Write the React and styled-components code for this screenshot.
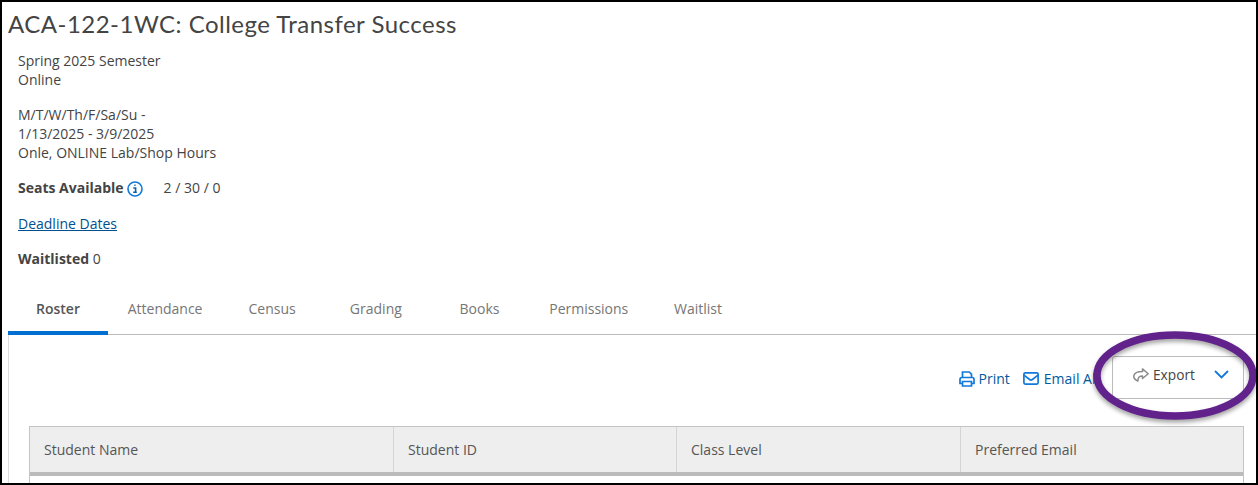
import styled, { createGlobalStyle } from "styled-components";

const GlobalStyle = createGlobalStyle`
  html, body {
    margin: 0;
    padding: 0;
    background: #fff;
  }
  body {
    font-family: "Open Sans", "Liberation Sans", sans-serif;
    font-size: 14px;
    color: #444;
  }
`;

const Frame = styled.div`
  box-sizing: border-box;
  width: 1258px;
  height: 485px;
  border: 2px solid #000;
  overflow: hidden;
  background: #fff;
  padding: 0 0 0 6px;
`;

const Title = styled.h1`
  margin: 0;
  padding-top: 6px;
  font-family: "Lato", "Noto Sans", sans-serif;
  font-size: 24px;
  font-weight: 400;
  line-height: 32px;
  letter-spacing: 0.48px;
  color: #444;
`;

const Details = styled.div`
  padding: 11px 0 0 10px;
  line-height: 19px;
`;

const Block = styled.div`
  margin-bottom: ${(p) => p.$gap || 0}px;
`;

const SeatsRow = styled.div`
  display: flex;
  align-items: center;
  height: 19px;
  margin-bottom: 17px;
`;

const Label = styled.strong`
  font-weight: 700;
`;

const SeatCount = styled.span`
  margin-left: 21px;
`;

const InfoButton = styled.svg`
  width: 16px;
  height: 16px;
  margin-left: 3px;
  margin-top: 2px;
`;

const DeadlineLink = styled.a`
  color: #00508f;
  text-decoration: underline;
`;

const Tabs = styled.div`
  display: flex;
  gap: 3.7px;
  margin-top: 23px;
  height: 43px;
  border-bottom: 1px solid #bbb;
  margin-right: -1px;
`;

const Tab = styled.div`
  box-sizing: border-box;
  min-width: 100px;
  height: 44px;
  padding: 0 16px 6px;
  display: flex;
  align-items: center;
  justify-content: center;
  color: ${(p) => (p.$active ? "#555" : "#767676")};
  font-weight: ${(p) => (p.$active ? 600 : 400)};
  border-bottom: 4px solid ${(p) => (p.$active ? "#006fd1" : "transparent")};
`;

const Panel = styled.div`
  border-left: 1px solid #ddd;
  padding: 21px 12px 0 20px;
`;

const Toolbar = styled.div`
  display: flex;
  justify-content: flex-end;
  align-items: center;
  height: 43px;
  margin-bottom: 27px;
`;

const ToolLink = styled.a`
  display: flex;
  align-items: center;
  gap: ${(p) => p.$iconGap}px;
  margin-right: ${(p) => p.$gap}px;
  margin-top: 2px;
  color: #005a9e;
  white-space: nowrap;
`;

const ExportWrap = styled.div`
  position: relative;
`;

const ExportButton = styled.div`
  box-sizing: border-box;
  display: flex;
  align-items: center;
  width: 132px;
  height: 43px;
  padding: 0 14px 6px 20px;
  border: 1px solid #bbb;
  border-radius: 3px;
  background: #fff;
  color: #444;
  font-size: 13.7px;
  font-weight: 400;
`;

const ExportText = styled.span`
  margin-left: 4px;
  flex: 1;
`;

const Ring = styled.svg`
  position: absolute;
  left: -22px;
  top: -28px;
  width: 170px;
  height: 96px;
  overflow: visible;
  pointer-events: none;
  filter: drop-shadow(0 3px 2px rgba(0, 0, 0, 0.35));
`;

const Table = styled.div`
  border: 1px solid #c4c4c4;
  border-bottom: none;
`;

const HeaderRow = styled.div`
  display: grid;
  grid-template-columns: 363px 283px 284px 1fr;
  height: 45px;
  background: #eee;
  border-bottom: 4px solid #bbb;
`;

const HeaderCell = styled.div`
  display: flex;
  align-items: center;
  padding-left: 14px;
  color: #555;
  border-left: ${(p) => (p.$first ? "none" : "1px solid #d4d4d4")};
`;

const BodyRow = styled.div`
  height: 12px;
  background: #fff;
`;

const PrintIcon = () => (
  <svg width="16" height="16" viewBox="0 0 16 16" fill="none" stroke="#1279dc" strokeWidth="1.7">
    <path d="M3.500 6.500V1h6.700l2.300 2.200v3.300" />
    <path d="M3.500 12.500H1V8.200C1 7.200 1.700 6.500 2.700 6.500h10.600c1 0 1.700.7 1.700 1.700v4.300h-2.500" />
    <path d="M3.500 10.500h9V15h-9z" />
  </svg>
);

const MailIcon = () => (
  <svg width="16" height="13" viewBox="0 0 16 13" fill="none" stroke="#1279dc" strokeWidth="1.7">
    <rect x="0.900" y="0.900" width="14.200" height="11.200" rx="1.300" />
    <path d="M1 3.200l5.600 4.300c.8.600 2 .6 2.800 0L15 3.200" />
  </svg>
);

const ShareIcon = () => (
  <svg width="16" height="14" viewBox="0 0 16 14" fill="none" stroke="#8a8a8a" strokeWidth="1.500" strokeLinejoin="round">
    <path d="M9.500.9l5.700 4.800-5.700 4.800V7.900C6.800 7.900 4.800 9 4.900 13 1.800 11.800.5 9.700.9 7.500 1.400 5 5 3.400 9.500 3.400z" />
  </svg>
);

const Chevron = () => (
  <svg width="15" height="9" viewBox="0 0 15 9" fill="none" stroke="#1279dc" strokeWidth="1.8">
    <path d="M1 1l6.500 6.500L14 1" />
  </svg>
);

const App = () => {
  return (
    <Frame>
      <GlobalStyle />
      <Title>ACA-122-1WC: College Transfer Success</Title>
      <Details>
        <Block $gap={16}>
          <div>Spring 2025 Semester</div>
          <div>Online</div>
        </Block>
        <Block $gap={16}>
          <div>M/T/W/Th/F/Sa/Su -</div>
          <div>1/13/2025 - 3/9/2025</div>
          <div>Onle, ONLINE Lab/Shop Hours</div>
        </Block>
        <SeatsRow>
          <Label>Seats Available</Label>
          <InfoButton viewBox="0 0 16 16" fill="none">
            <circle cx="8" cy="8" r="7" stroke="#1279dc" strokeWidth="1.600" />
            <path d="M6.300 7h2.300v4.200h1.200M6.200 11.200h3.600M7.300 4.300h1.300" stroke="#0a60b0" strokeWidth="1.600" />
          </InfoButton>
          <SeatCount>2 / 30 / 0</SeatCount>
        </SeatsRow>
        <Block $gap={16}>
          <DeadlineLink href="#">Deadline Dates</DeadlineLink>
        </Block>
        <Block>
          <Label>Waitlisted</Label> 0
        </Block>
      </Details>
      <Tabs>
        <Tab $active>Roster</Tab>
        <Tab>Attendance</Tab>
        <Tab>Census</Tab>
        <Tab>Grading</Tab>
        <Tab>Books</Tab>
        <Tab>Permissions</Tab>
        <Tab>Waitlist</Tab>
      </Tabs>
      <Panel>
        <Toolbar>
          <ToolLink $gap={13} $iconGap={4}>
            <PrintIcon />
            Print
          </ToolLink>
          <ToolLink $gap={13} $iconGap={5}>
            <MailIcon />
            Email All
          </ToolLink>
          <ExportWrap>
            <ExportButton>
              <ShareIcon />
              <ExportText>Export</ExportText>
              <Chevron />
            </ExportButton>
            <Ring viewBox="0 0 170 96">
              <ellipse cx="85" cy="47.500" rx="78" ry="40.500" fill="none" stroke="#62228b" strokeWidth="7.500" />
            </Ring>
          </ExportWrap>
        </Toolbar>
        <Table>
          <HeaderRow>
            <HeaderCell $first>Student Name</HeaderCell>
            <HeaderCell>Student ID</HeaderCell>
            <HeaderCell>Class Level</HeaderCell>
            <HeaderCell>Preferred Email</HeaderCell>
          </HeaderRow>
          <BodyRow />
        </Table>
      </Panel>
    </Frame>
  );
};

export default App;
